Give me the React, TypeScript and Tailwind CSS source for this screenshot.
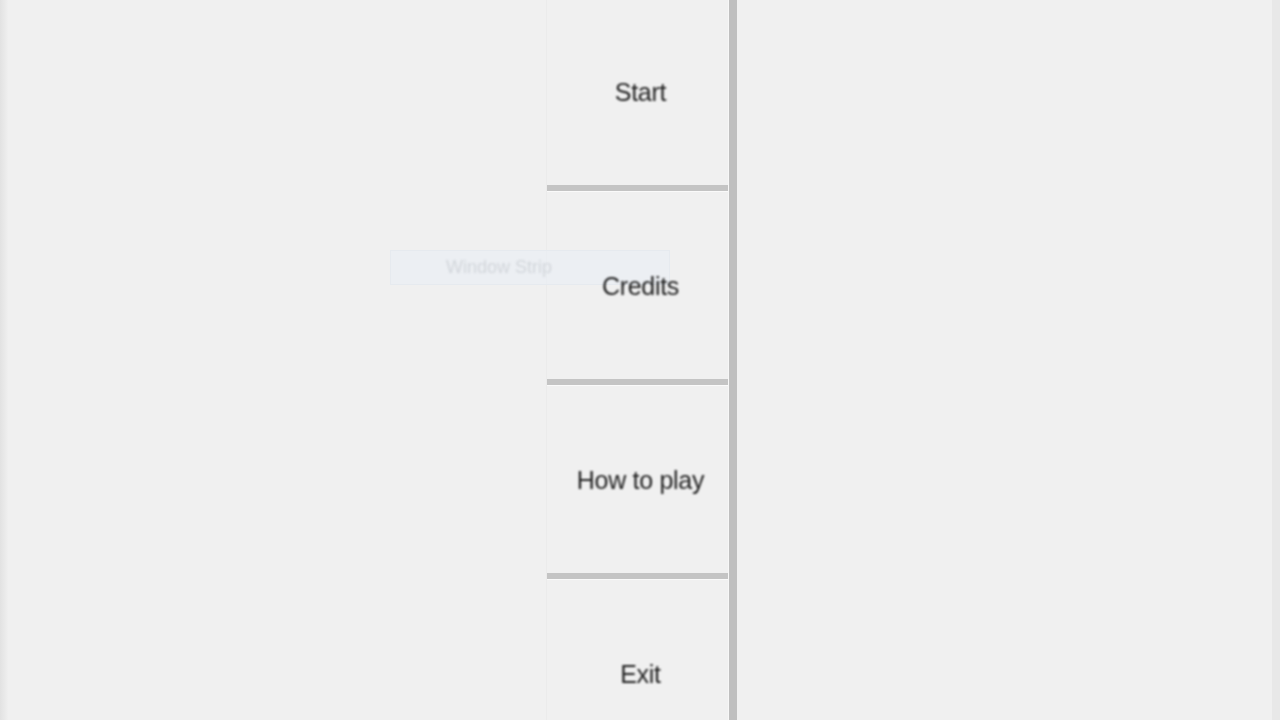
import React from 'react';

const items = ['Start', 'Credits', 'How to play', 'Exit'];

export default function App() {
  return (
    <div className="relative flex h-screen w-screen overflow-hidden bg-[#f0f0f0] font-['Liberation_Sans',Arial,sans-serif]">
      {/* window edges */}
      <div className="w-[8px] shrink-0 bg-gradient-to-r from-[#e2e2e2] to-[#efefef]" />
      <div className="w-[538px] shrink-0" />
      <div className="mt-[-3px] flex w-[182px] shrink-0 flex-col border-l border-[#ebebeb]">
        {items.map((label) => (
          <div
            key={label}
            className="flex h-[194px] shrink-0 items-center justify-center border-b-[6px] border-[#c4c4c4] pl-[6px] pt-[4px] shadow-[0_1px_0_#fafafa]"
          >
            <span className="relative z-10 text-[25px] tracking-[-0.3px] text-[#1e1e1e] blur-[0.9px]">{label}</span>
          </div>
        ))}
      </div>
      <div className="flex w-[11px] shrink-0">
        <div className="w-[1px] bg-[#f7f7f7]" />
        <div className="w-[8px] bg-[#bfbfbf] blur-[0.6px]" />
      </div>
      <div className="flex-1" />
      <div className="w-[8px] shrink-0 bg-[#e8e8e8]" />

      {/* faint strip label */}
      <div className="absolute left-[390px] top-[250px] z-0 flex h-[35px] w-[280px] items-center border border-[#e6eaef] bg-[#e9eef4]/70 pl-[55px]">
        <span className="text-[18px] text-[#d2d6db] blur-[0.8px]">Window Strip</span>
      </div>
    </div>
  );
}
